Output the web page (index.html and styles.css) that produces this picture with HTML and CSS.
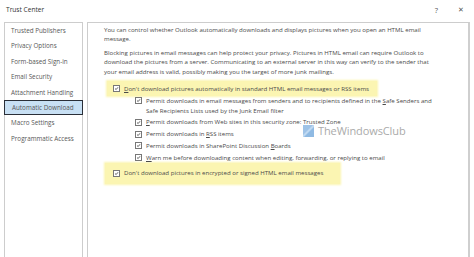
FILE: index.html
```html
<!DOCTYPE html>
<html lang="en">
<head>
  <meta charset="UTF-8" />
  <title>Trust Center</title>
  <link rel="stylesheet" href="styles.css">
</head>
<body>
  <div class="titlebar">
    <span class="title">Trust Center</span>
    <span class="title-btn help">?</span>
    <span class="title-btn close">✕</span>
  </div>

  <div class="main">
    <ul class="nav">
      <li class="nav-item">Trusted Publishers</li>
      <li class="nav-item">Privacy Options</li>
      <li class="nav-item">Form-based Sign-in</li>
      <li class="nav-item">Email Security</li>
      <li class="nav-item">Attachment Handling</li>
      <li class="nav-item active">Automatic Download</li>
      <li class="nav-item">Macro Settings</li>
      <li class="nav-item">Programmatic Access</li>
    </ul>

    <div class="content">
      <p class="para">You can control whether Outlook automatically downloads and displays pictures when you open an HTML email<br>message.</p>
      <p class="para">Blocking pictures in email messages can help protect your privacy. Pictures in HTML email can require Outlook to<br>download the pictures from a server. Communicating to an external server in this way can verify to the sender that<br>your email address is valid, possibly making you the target of more junk mailings.</p>

      <div class="option highlight">
        <span class="check"><svg viewBox="0 0 7 7"><polyline points="1.5,3.6 3,5 5.6,1.8" /></svg></span>
        <span><u>D</u>on't download pictures automatically in standard HTML email messages or RSS items</span>
      </div>

      <div class="sub-options">
        <div class="option">
          <span class="check"><svg viewBox="0 0 7 7"><polyline points="1.5,3.6 3,5 5.6,1.8" /></svg></span>
          <span>Permit downloads in email messages from senders and to recipients defined in the <u>S</u>afe Senders and<br>Safe Recipients Lists used by the Junk Email filter</span>
        </div>
        <div class="option">
          <span class="check"><svg viewBox="0 0 7 7"><polyline points="1.5,3.6 3,5 5.6,1.8" /></svg></span>
          <span><u>P</u>ermit downloads from Web sites in this security zone: Trusted Zone</span>
        </div>
        <div class="option">
          <span class="check"><svg viewBox="0 0 7 7"><polyline points="1.5,3.6 3,5 5.6,1.8" /></svg></span>
          <span>Permit downloads in <u>R</u>SS items</span>
        </div>
        <div class="option">
          <span class="check"><svg viewBox="0 0 7 7"><polyline points="1.5,3.6 3,5 5.6,1.8" /></svg></span>
          <span>Permit downloads in SharePoint Discussion <u>B</u>oards</span>
        </div>
        <div class="option">
          <span class="check"><svg viewBox="0 0 7 7"><polyline points="1.5,3.6 3,5 5.6,1.8" /></svg></span>
          <span><u>W</u>arn me before downloading content when editing, forwarding, or replying to email</span>
        </div>
      </div>

      <div class="option highlight highlight-tall">
        <span class="check"><svg viewBox="0 0 7 7"><polyline points="1.5,3.6 3,5 5.6,1.8" /></svg></span>
        <span>Don't download pictures in encrypted or signed HTML email messages</span>
      </div>
    </div>
  </div>

  <!-- watermark over the content -->
  <div class="watermark">
    <span class="wm-logo"></span>
    <span class="wm-text">TheWindowsClub</span>
  </div>
</body>
</html>
```

FILE: styles.css
```css
* {
  margin: 0;
  padding: 0;
  box-sizing: border-box;
}

body {
  font-family: 'Open Sans', 'Noto Sans', sans-serif;
  font-size: 6.1px;
  color: #4a4a4a;
  background: #fff;
  width: 474px;
  height: 257px;
  overflow: hidden;
  position: relative;
}

/* Title bar */
.titlebar {
  height: 22px;
  display: flex;
  align-items: center;
  padding: 0 0 3px 6px;
}

.title {
  flex: 1;
  font-size: 6.6px;
  color: #333;
}

.title-btn {
  font-size: 7.5px;
  color: #555;
}

.help {
  margin-right: 20px;
}

.close {
  margin-right: 10px;
  font-size: 7px;
}

/* Two panes */
.main {
  display: flex;
  gap: 4px;
  padding: 0 4px 0 4px;
  height: 235px;
}

.nav {
  list-style: none;
  width: 79px;
  border: 1px solid #cdcdcd;
  border-bottom: none;
}

.nav-item {
  height: 15.4px;
  line-height: 15.4px;
  padding-left: 6px;
  font-size: 6.3px;
  color: #585858;
  white-space: nowrap;
}

.nav-item.active {
  background: #c8e0f4;
  border: 1px solid #2a2f38;
  line-height: 13.4px;
  margin: 0 -1px;
  padding-left: 7px;
}

.content {
  flex: 1;
  border: 1px solid #cdcdcd;
  border-right: 2px solid #cfcfcf;
  border-bottom: none;
  padding: 1.5px 10px 0 16px;
  line-height: 9.3px;
  white-space: nowrap;
}

.para {
  margin-bottom: 5px;
}

.option {
  display: flex;
  align-items: flex-start;
  gap: 4px;
}

.check {
  width: 7px;
  height: 7px;
  margin-top: 1.2px;
  border: 1px solid #777;
  background: #fff;
  flex-shrink: 0;
}

.check svg {
  display: block;
  width: 5px;
  height: 5px;
  fill: none;
  stroke: #333;
  stroke-width: 1.1;
}

.highlight {
  width: fit-content;
  background: #fbf5b2;
  box-shadow: 0 0 2px 1px #fbf5b2;
  margin: 1.5px 0 0 3px;
  padding: 3px 8px 3px 6px;
}

.highlight-tall {
  margin: 1px 0 0 1px;
  padding: 5px 17px 6px 8px;
}

.sub-options {
  padding-left: 31px;
}

.sub-options .option {
  margin-top: 2.6px;
}

.sub-options .option:first-child {
  margin-top: 0;
}

u {
  text-decoration-thickness: 0.5px;
  text-underline-offset: 1px;
}

/* Watermark */
.watermark {
  position: absolute;
  left: 303px;
  top: 123px;
  display: flex;
  align-items: center;
  gap: 4px;
  opacity: 0.75;
}

.wm-logo {
  width: 11px;
  height: 12px;
  background: linear-gradient(135deg, #7fb0e0 0%, #7fb0e0 40%, #b9d6f2 50%, #6aa3da 60%, #6aa3da 100%);
}

.wm-text {
  font-family: 'Open Sans', sans-serif;
  font-size: 11px;
  color: #8e8e8e;
  letter-spacing: -0.1px;
}
```
